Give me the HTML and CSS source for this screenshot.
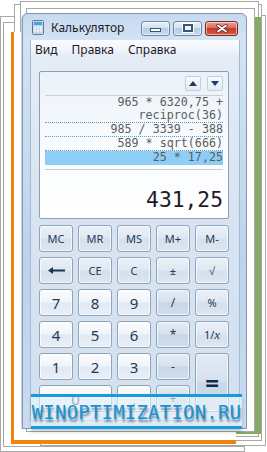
FILE: index.html
```html
<!DOCTYPE html>
<html lang="ru">
<head>
  <meta charset="UTF-8">
  <title>Калькулятор</title>
  <link rel="stylesheet" href="styles.css">
</head>
<body>
  <div class="stage">
    <div class="sheet s1"></div>
    <div class="sheet s2"></div>
    <div class="sheet s3"></div>
    <div class="sheet s4"></div>
    <div class="sheet s5"></div>
    <div class="green"></div>
    <div class="sheet orange"></div>
    <div class="sheet front"></div>

    <div class="window">
      <div class="titlebar">
        <svg class="app-icon" width="12" height="15" viewBox="0 0 12 15">
          <rect x="0.5" y="0.5" width="11" height="14" rx="1" fill="#c9d6e3" stroke="#5d7895"/>
          <rect x="2" y="2" width="8" height="3" fill="#3aa7e6"/>
          <g fill="#f4f8fc">
            <rect x="2" y="6.5" width="2" height="2"/><rect x="5" y="6.5" width="2" height="2"/><rect x="8" y="6.5" width="2" height="2"/>
            <rect x="2" y="9.5" width="2" height="2"/><rect x="5" y="9.5" width="2" height="2"/><rect x="8" y="9.5" width="2" height="2"/>
          </g>
        </svg>
        <span class="title">Калькулятор</span>
        <div class="caption">
          <span class="cap min"><i></i></span>
          <span class="cap max"><i></i></span>
          <span class="cap close">
            <svg width="12" height="9" viewBox="0 0 12 9">
              <path d="M2 1.5 L10 7.5 M10 1.5 L2 7.5" stroke="#5a2520" stroke-width="3.4" stroke-linecap="round"/>
              <path d="M2 1.5 L10 7.5 M10 1.5 L2 7.5" stroke="#ffffff" stroke-width="1.8" stroke-linecap="round"/>
            </svg>
          </span>
        </div>
      </div>

      <div class="client">
        <nav class="menu">
          <span>Вид</span>
          <span>Правка</span>
          <span>Справка</span>
        </nav>

        <div class="calc">
          <div class="display">
            <div class="hist-nav">
              <span class="arr">
                <svg width="8" height="5" viewBox="0 0 8 5"><path d="M0 5 L4 0 L8 5 Z" fill="#1d3b63"/></svg>
              </span>
              <span class="arr">
                <svg width="8" height="5" viewBox="0 0 8 5"><path d="M0 0 L8 0 L4 5 Z" fill="#1d3b63"/></svg>
              </span>
            </div>
            <div class="history">
              <div class="entry">965 * 6320,75 +<br>reciproc(36)</div>
              <div class="entry">985 / 3339 - 388</div>
              <div class="entry">589 * sqrt(666)</div>
              <div class="entry current">25 * 17,25</div>
            </div>
            <div class="result">431,25</div>
          </div>

          <div class="keys">
            <span class="key fn">MC</span>
            <span class="key fn">MR</span>
            <span class="key fn">MS</span>
            <span class="key fn">M+</span>
            <span class="key fn">M-</span>

            <span class="key fn">
              <svg width="17" height="7" viewBox="0 0 17 7"><path d="M0 3.5 L5 0 L5 2.4 L17 2.4 L17 4.6 L5 4.6 L5 7 Z" fill="#1d3557"/></svg>
            </span>
            <span class="key fn">CE</span>
            <span class="key fn">C</span>
            <span class="key fn">±</span>
            <span class="key fn">√</span>

            <span class="key num">7</span>
            <span class="key num">8</span>
            <span class="key num">9</span>
            <span class="key op">/</span>
            <span class="key fn">%</span>

            <span class="key num">4</span>
            <span class="key num">5</span>
            <span class="key num">6</span>
            <span class="key op">*</span>
            <span class="key fn">1/<em>x</em></span>

            <span class="key num">1</span>
            <span class="key num">2</span>
            <span class="key num">3</span>
            <span class="key op">-</span>
            <span class="key op equals">=</span>

            <span class="key num zero">0</span>
            <span class="key num">,</span>
            <span class="key op">+</span>
          </div>
        </div>
      </div>
    </div>

    <div class="watermark">WINOPTIMIZATION.RU</div>
  </div>
</body>
</html>
```

FILE: styles.css
```css
:root {
  --paper-line: #a8a8a8;
  --orange: #f5820f;
  --green: #88a866;
  --key-text: #1e395b;
  --key-border: #8ea3bd;
  --wm-blue: #179bd9;
}

body {
  margin: 0;
  background: #fff;
  font-family: 'Noto Sans', sans-serif;
}

.stage {
  position: relative;
  width: 267px;
  height: 452px;
  overflow: hidden;
  box-sizing: border-box;
  padding: 13px 0 0 22px;
}

/* paper stack behind the window */
.sheet {
  position: absolute;
  box-sizing: border-box;
  background: #fff;
  border: 1px solid var(--paper-line);
}

.s1 { left: 0; top: 16px; width: 245px; height: 436px; }
.s2 { left: 3px; top: 22px; width: 241px; height: 425px; }
.s3 { left: 40px; top: 15px; width: 226px; height: 431px; }
.s4 { left: 14px; top: 4px; width: 248px; height: 437px; }
.s5 { left: 20px; top: 1px; width: 239px; height: 436px; }

.green {
  position: absolute;
  left: 200px;
  top: 17px;
  width: 61px;
  height: 417px;
  background: var(--green);
}

.orange {
  left: 11px;
  top: 32px;
  width: 225px;
  height: 412px;
  border: 0;
  border-left: 3px solid var(--orange);
  border-bottom: 4px solid var(--orange);
}

.front { left: 26px; top: 8px; width: 229px; height: 424px; }

/* window */
.window {
  position: relative;
  z-index: 2;
  width: 225px;
  height: 416px;
  box-sizing: border-box;
  border: 1px solid #7f97b5;
  border-radius: 6px 6px 0 0;
  background: linear-gradient(#c6daf0, #d3e3f4 26px, #bdd3ec 60%, #c9dbef);
  padding: 0 6px 7px 7px;
  display: flex;
  flex-direction: column;
  box-shadow: -1px 0 0 rgba(120, 140, 160, 0.35);
}

.titlebar {
  height: 26px;
  display: flex;
  align-items: center;
}

.app-icon {
  margin: 1px 0 0 2px;
}

.title {
  margin-left: 7px;
  font-size: 12px;
  color: #1e1a24;
}

.caption {
  margin-left: auto;
  margin-right: 2px;
  margin-top: 2px;
  display: flex;
  gap: 3px;
}

.cap {
  width: 29px;
  height: 15px;
  box-sizing: border-box;
  border: 1px solid #6d87a8;
  border-radius: 3px;
  background: linear-gradient(#e9f1fa, #d3e1f0 45%, #b7cbe2 50%, #c9dbee);
  display: flex;
  align-items: center;
  justify-content: center;
  box-shadow: inset 0 0 0 1px rgba(255, 255, 255, 0.5);
}

.cap.min i {
  width: 11px;
  height: 4px;
  margin-top: 4px;
  box-sizing: border-box;
  border: 1px solid #3d5473;
  background: #fff;
}

.cap.max i {
  width: 10px;
  height: 8px;
  box-sizing: border-box;
  border: 2px solid #3d5473;
  background: #e8f0f8;
  outline: 1px solid #fff;
}

.cap.close {
  width: 33px;
  border-color: #7a2a22;
  background: linear-gradient(#eea194, #db6b5c 45%, #c53a2a 50%, #d65a44);
}

/* client area */
.client {
  flex: 1;
  display: flex;
  flex-direction: column;
  border: 1px solid #a4b9d2;
  border-top: 0;
}

.menu {
  height: 18px;
  display: flex;
  align-items: center;
  gap: 14px;
  padding-left: 4px;
  font-size: 12px;
  color: #1d1a2b;
  background: linear-gradient(#fbfcfe, #f1f5fa 50%, #e2e9f3);
}

.calc {
  flex: 1;
  padding: 13px 10px 0 8px;
  background: linear-gradient(#e4ecf6, #d8e4f1 40%, #d3e0ee);
}

/* display */
.display {
  height: 148px;
  box-sizing: border-box;
  border: 1px solid #8d9fb6;
  border-radius: 2px;
  padding: 4px 5px 0 5px;
  background: linear-gradient(#eaf1f8, #f8fbfd 45%, #ffffff);
  display: flex;
  flex-direction: column;
  font-family: 'DejaVu Sans Mono', monospace;
}

.hist-nav {
  display: flex;
  justify-content: flex-end;
  gap: 6px;
  margin-bottom: 4px;
}

.arr {
  width: 16px;
  height: 15px;
  box-sizing: border-box;
  border: 1px solid #c3cfdd;
  border-radius: 2px;
  background: linear-gradient(#f7fafd, #e3ebf4);
  display: flex;
  align-items: center;
  justify-content: center;
}

.history {
  border-top: 1px solid #c6ced8;
  border-bottom: 1px solid #c6ced8;
  padding-bottom: 4px;
  font-size: 11.7px;
  line-height: 13px;
  color: #5c5c5c;
  text-align: right;
}

.entry {
  border-bottom: 1px dotted #5f9bc9;
}

.entry.current {
  border-bottom: 0;
  padding-bottom: 1px;
  background: #8ecdf5;
}

.result {
  margin-top: auto;
  padding-bottom: 6px;
  text-align: right;
  font-size: 21.3px;
  line-height: 24px;
  color: #1c1a26;
}

/* keypad */
.keys {
  margin-top: 6px;
  display: grid;
  grid-template-columns: repeat(5, 34px);
  grid-auto-rows: 27px;
  gap: 5px;
}

.key {
  box-sizing: border-box;
  border: 1px solid var(--key-border);
  border-radius: 3px;
  display: flex;
  align-items: center;
  justify-content: center;
  color: var(--key-text);
  font-size: 11px;
  box-shadow: inset 0 0 0 1px rgba(255, 255, 255, 0.65);
}

.fn {
  background: linear-gradient(#eaf0f7, #dfe8f2 48%, #d5e0ec 52%, #dde6f0);
}

.num {
  font-size: 15px;
  background: linear-gradient(#fbfcfe, #f0f4f9 48%, #e1e9f2 52%, #e9eff6);
}

.op {
  font-size: 12px;
  background: linear-gradient(#e3ebf4, #d6e1ed 48%, #c8d6e6 52%, #d2deeb);
}

.key em {
  font-family: 'Liberation Serif', serif;
  font-size: 13px;
}

.equals {
  grid-row: span 2;
  font-size: 24px;
  font-weight: bold;
  color: #12294a;
}

.zero {
  grid-column: span 2;
}

/* watermark */
.watermark {
  position: absolute;
  z-index: 3;
  left: 31px;
  top: 394px;
  width: 211px;
  height: 35px;
  box-sizing: border-box;
  border-top: 3px solid var(--wm-blue);
  border-bottom: 3px solid var(--wm-blue);
  background: rgba(236, 246, 253, 0.6);
  box-shadow: 0 3px 3px rgba(40, 60, 80, 0.25);
  display: flex;
  align-items: center;
  justify-content: center;
  font-family: 'DejaVu Sans Mono', monospace;
  font-size: 19px;
  letter-spacing: 0.2px;
  color: #1594d4;
  text-shadow: 1px 3px 2px rgba(20, 50, 80, 0.5);
}
```
